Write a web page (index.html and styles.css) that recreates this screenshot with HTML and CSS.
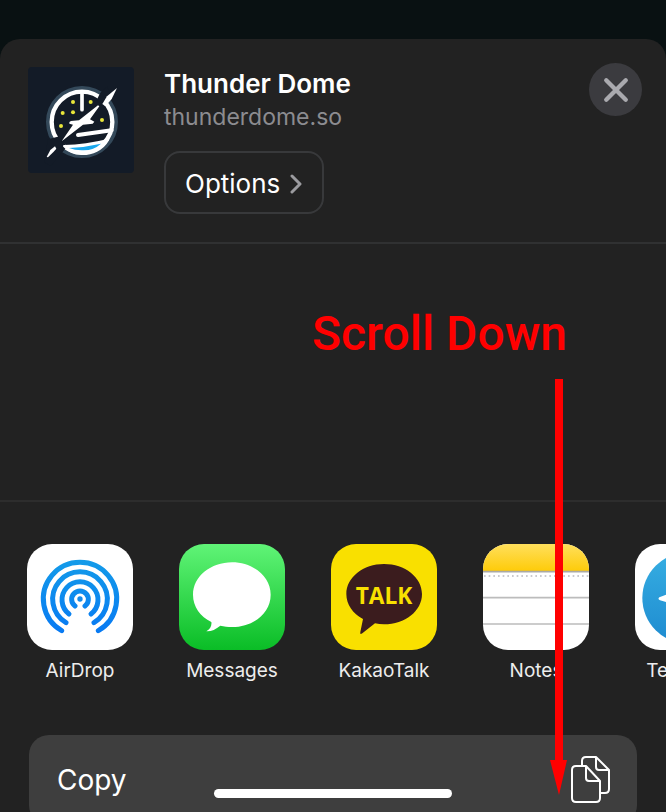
FILE: index.html
```html
<!DOCTYPE html>
<html lang="en">
<head>
<meta charset="utf-8">
<meta name="viewport" content="width=device-width, initial-scale=1">
<title>Share Thunder Dome</title>
<link rel="stylesheet" href="styles.css">
</head>
<body>
<main class="sheet">
  <header class="header">
    <svg class="site-logo" viewBox="24 21 318 318" aria-hidden="true">
      <rect x="24" y="21" width="318" height="318" rx="12" fill="#131b27"/>
      <circle cx="186" cy="186" r="99" fill="none" stroke="#34495a" stroke-width="18"/>
      <circle cx="186" cy="186" r="96" fill="#131b27"/>
      <circle cx="186" cy="186" r="91" fill="none" stroke="#fff" stroke-width="13"/>
      <path d="M72 306L84 238L122 228L140 262L92 318Z" fill="#131b27"/>
      <path d="M241 98L262 80L274 108L250 138L230 120Z" fill="#131b27"/>
      <path d="M186 96V149" stroke="#fff" stroke-width="11" stroke-linecap="round"/>
      <path d="M174 225L275 211" stroke="#fff" stroke-width="12" stroke-linecap="round"/>
      <path d="M132 258C175 257 220 251 264 240C248 269 216 283 184 282C160 281 144 272 132 258Z" fill="#fff" stroke="#fff" stroke-width="6" stroke-linejoin="round"/>
      <path d="M147 264Q195 262 243 251Q221 271 191 271Q166 272 147 264Z" fill="#19a8ee"/>
      <path d="M125 244L159 194L148 191Q146 185 153 183L177 181L234 136L238 139L210 178L223 185L218 191L189 194Z" fill="#fff"/>
      <path d="M291 84L275 117L256 139L247 132L261 109Z" fill="#fff"/>
      <path d="M80 291L91 270L105 259L109 266L101 275L84 292Z" fill="#fff"/>
      <g fill="#e9e63a"><circle cx="159" cy="126" r="6"/><circle cx="212" cy="126" r="6"/><circle cx="128" cy="159" r="6"/><circle cx="159" cy="157" r="6"/><circle cx="123" cy="198" r="6"/><circle cx="246" cy="180" r="6"/></g>
    </svg>
    <div class="site">
      <h1 class="site-name">Thunder Dome</h1>
      <p class="site-url">thunderdome.so</p>
      <button class="options" type="button">Options
        <svg class="chevron" viewBox="0 0 12 20" aria-hidden="true"><path d="M2 2L10 10L2 18" fill="none" stroke="#9b9b9f" stroke-width="3" stroke-linecap="round" stroke-linejoin="round"/></svg>
      </button>
    </div>
    <button class="close" type="button" aria-label="Close">
      <svg class="close-icon" viewBox="0 0 24 24" aria-hidden="true"><path d="M3 3L21 21M21 3L3 21" stroke="#aaaaaf" stroke-width="4" stroke-linecap="round"/></svg>
    </button>
  </header>

  <section class="people" aria-label="Suggested people"></section>

  <nav class="apps" aria-label="Share with an app">
    <button class="app" type="button">
      <svg class="app-icon" viewBox="0 0 318 318" aria-hidden="true">
        <defs><linearGradient id="air" gradientUnits="userSpaceOnUse" x1="0" y1="48" x2="0" y2="266"><stop offset="0" stop-color="#139be9"/><stop offset="1" stop-color="#087af3"/></linearGradient></defs>
        <rect width="318" height="318" fill="#fff"/>
        <g fill="none" stroke="url(#air)" stroke-width="15" stroke-linecap="round">
          <path d="M104 260A110 110 0 1 1 214 260"/>
          <path d="M117 236A82 82 0 1 1 201 236"/>
          <path d="M126 210A54 54 0 1 1 192 210"/>
          <path d="M144 186A25 25 0 1 1 174 186"/>
        </g>
        <circle cx="159" cy="165" r="8" fill="#168be9"/>
      </svg>
      <span>AirDrop</span>
    </button>
    <button class="app" type="button">
      <svg class="app-icon" viewBox="0 0 318 318" aria-hidden="true">
        <defs><linearGradient id="msg" x1="0" y1="0" x2="0" y2="1"><stop offset="0" stop-color="#60f477"/><stop offset="1" stop-color="#0abd26"/></linearGradient></defs>
        <rect width="318" height="318" fill="url(#msg)"/>
        <path d="M159 55C222 55 275 97 275 152C275 207 223 249 159 249C147 249 135 247 124 245C110 256 96 263 82 262C93 255 99 246 97 234C64 218 42 188 42 152C42 97 96 55 159 55Z" fill="#fff"/>
      </svg>
      <span>Messages</span>
    </button>
    <button class="app" type="button">
      <svg class="app-icon" viewBox="0 0 318 318" aria-hidden="true">
        <rect width="318" height="318" fill="#f9e000"/>
        <path d="M159 60C222 60 273 100 273 150C273 201 222 241 159 241Q145 241 132 238L94 268Q86 274 88 264L96 225C65 209 46 181 46 150C46 100 97 60 159 60Z" fill="#3b1c1e"/>
        <text class="talk" x="159" y="179" text-anchor="middle">TALK</text>
      </svg>
      <span>KakaoTalk</span>
    </button>
    <button class="app" type="button">
      <svg class="app-icon" viewBox="0 0 318 318" aria-hidden="true">
        <defs><linearGradient id="note" x1="0" y1="0" x2="0" y2="1"><stop offset="0" stop-color="#ffdf5c"/><stop offset="1" stop-color="#fecb08"/></linearGradient></defs>
        <rect width="318" height="318" fill="#fff"/>
        <rect width="318" height="82" fill="url(#note)"/>
        <path d="M0 83H318" stroke="#aaa9a5" stroke-width="5"/>
        <path d="M3 96H318" stroke="#b9b9be" stroke-width="5" stroke-dasharray="5 9"/>
        <path d="M0 161H318M0 240H318" stroke="#bcbcbc" stroke-width="5"/>
      </svg>
      <span>Notes</span>
    </button>
    <button class="app" type="button">
      <svg class="app-icon" viewBox="0 0 318 318" aria-hidden="true">
        <defs><linearGradient id="tg" x1="0" y1="0" x2="0" y2="1"><stop offset="0" stop-color="#36aee2"/><stop offset="1" stop-color="#1e8bd0"/></linearGradient></defs>
        <rect width="318" height="318" fill="#fff"/>
        <circle cx="159" cy="162" r="137" fill="url(#tg)"/>
        <path d="M73 160L224 100Q239 96 235 113L210 232Q207 247 193 238L155 210L136 229Q129 235 127 224L113 180L75 169Q67 165 73 160Z" fill="#fff"/>
        <path d="M126 181L203 132L143 188L137 213Z" fill="#acd6ee"/>
      </svg>
      <span>Telegram</span>
    </button>
  </nav>

  <button class="action" type="button">Copy
    <svg class="copy-icon" viewBox="0 0 40 48" fill="none" stroke="#fff" stroke-width="2" stroke-linejoin="round" aria-hidden="true">
      <path d="M11 10V5Q11 1 15 1H25L38 14V33Q38 37 34 37H30"/>
      <path d="M25 2V11Q25 14 28 14H38"/>
      <path d="M5 10H15L29 25V42Q29 46 25 46H5Q1 46 1 42V14Q1 10 5 10Z"/>
      <path d="M15 11V22Q15 25 18 25H29"/>
    </svg>
  </button>
</main>

<div class="hint">
  <p class="hint-text">Scroll Down</p>
  <svg class="hint-arrow" viewBox="0 0 17 416" aria-hidden="true"><path d="M5 0H13V381H17L9 416L0 381H5Z" fill="#f00"/></svg>
</div>
<div class="home-bar"></div>
</body>
</html>
```
FILE: styles.css
```css
* {
  box-sizing: border-box;
}

body {
  position: relative;
  display: flex;
  height: 100vh;
  margin: 0;
  padding-top: 39px;
  overflow: hidden;
  background: #091112;
  color: #fff;
  font-family: Inter, "Liberation Sans", sans-serif;
}

h1,
p {
  margin: 0;
}

button {
  border: 0;
  padding: 0;
  background: none;
  color: inherit;
  font: inherit;
}

svg {
  display: block;
  flex: none;
}

.sheet {
  flex: 1;
  min-width: 0;
  overflow: hidden;
  border-radius: 20px 20px 0 0;
  background: #222;
}

.header {
  display: flex;
  align-items: flex-start;
  padding: 24px 24px 28px 28px;
  border-bottom: 2px solid #303132;
}

.site-logo {
  width: 106px;
  margin-top: 4px;
}

.site {
  flex: 1;
  padding-left: 30px;
}

.site-name {
  padding-top: 4px;
  font-size: 26px;
  font-weight: 600;
  line-height: 34px;
}

.site-url {
  color: #8c8c90;
  font-size: 23px;
  line-height: 32px;
}

.options {
  display: flex;
  align-items: center;
  gap: 10px;
  height: 63px;
  margin-top: 18px;
  padding: 2px 20px 0 19px;
  border: 2px solid #38393b;
  border-radius: 16px;
  font-size: 26px;
}

.chevron {
  width: 12px;
}

.close {
  display: grid;
  place-items: center;
  width: 53px;
  height: 53px;
  border-radius: 50%;
  background: #3b3b3f;
}

.close-icon {
  width: 26px;
}

.people {
  height: 258px;
  border-bottom: 2px solid #2d2d2d;
}

.apps {
  display: flex;
  gap: 46px;
  padding: 42px 27px 51px;
  overflow: hidden;
}

.app {
  display: flex;
  flex: none;
  flex-direction: column;
  align-items: center;
  gap: 8px;
  width: 106px;
  color: #ededed;
  font-size: 19px;
  line-height: 26px;
}

.app-icon {
  width: 106px;
  border-radius: 25px;
}

.talk {
  fill: #f9e000;
  font: 700 68px "Open Sans", sans-serif;
}

.action {
  display: flex;
  align-items: center;
  justify-content: space-between;
  width: calc(100% - 58px);
  height: 90px;
  margin: 0 29px;
  padding: 0 26px 0 28px;
  border-radius: 20px;
  background: #3e3e3e;
  font-size: 28px;
}

.copy-icon {
  width: 40px;
}

.hint {
  position: absolute;
  top: 304px;
  right: 99px;
  display: flex;
  flex-direction: column;
  align-items: flex-end;
  gap: 15px;
  color: #f00;
  pointer-events: none;
}

.hint-text {
  font: 500 48px/60px Roboto, sans-serif;
}

.hint-arrow {
  width: 17px;
}

.home-bar {
  position: absolute;
  bottom: 14px;
  left: 50%;
  width: 238px;
  height: 9px;
  border-radius: 5px;
  background: #fff;
  transform: translateX(-50%);
}
```
